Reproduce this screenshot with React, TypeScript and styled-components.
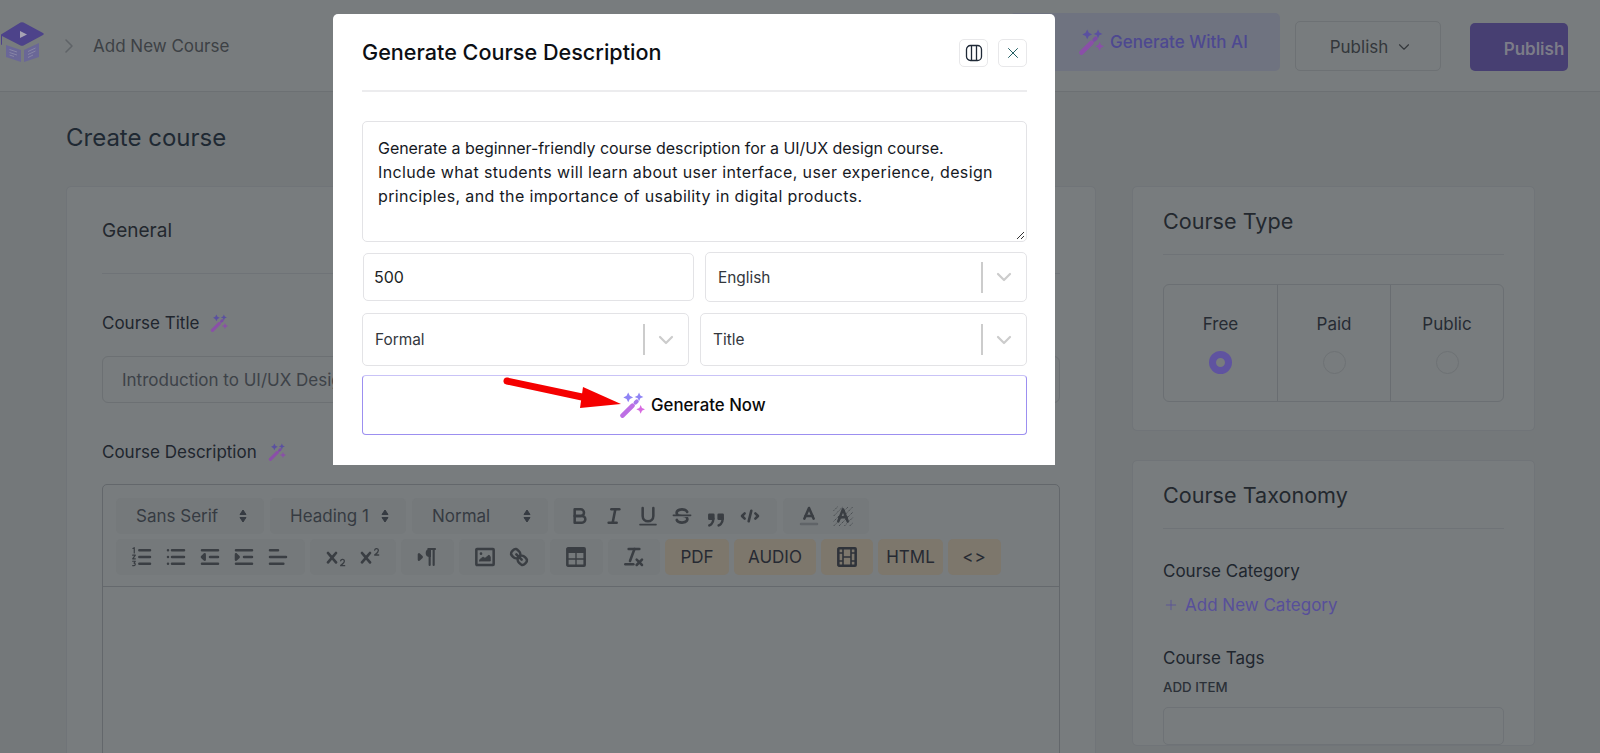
import React from "react"
import styled, { createGlobalStyle } from "styled-components"
import { ChevronDown, ChevronRight, Plus, X } from "lucide-react"

const GlobalStyle = createGlobalStyle`
  html, body {
    margin: 0;
    padding: 0;
    height: 753px;
    overflow: hidden;
    background: #74787a;
    font-family: "Inter", "Liberation Sans", sans-serif;
  }
  * { box-sizing: border-box; }
`

const Page = styled.div`
  position: relative;
  width: 1600px;
  height: 753px;
  overflow: hidden;
`

const Header = styled.header`
  height: 92px;
  padding: 0 32px 20px 0;
  display: flex;
  justify-content: space-between;
  align-items: flex-end;
  background: #787c7e;
  border-bottom: 1px solid #6c7073;
`

const Crumbs = styled.div`
  display: flex;
  align-items: center;
  align-self: center;
  margin-top: 20px;
  color: #3d4145;
  font-size: 17px;
`

const CrumbArrow = styled.span`
  display: flex;
  margin: 0 12px 0 11px;
  color: #5f6367;
`

const HeaderActions = styled.div`
  display: flex;
  align-items: flex-end;
`

const AiButton = styled.div`
  width: 270px;
  height: 58px;
  margin-right: 15px;
  padding-left: 68px;
  display: flex;
  align-items: center;
  gap: 6px;
  border-radius: 5px;
  background: #6f7380;
  color: #4d4890;
  font-size: 17px;
  font-weight: 500;
`

const PublishSelect = styled.div`
  width: 146px;
  height: 50px;
  margin-right: 29px;
  padding: 2px 0 0 7px;
  display: flex;
  align-items: center;
  justify-content: center;
  gap: 7px;
  border: 1px solid #6d7174;
  border-radius: 5px;
  color: #33373b;
  font-size: 17px;
`

const PublishButton = styled.div`
  width: 98px;
  height: 48px;
  padding: 3px 0 0 30px;
  display: flex;
  align-items: center;
  justify-content: center;
  border-radius: 5px;
  background: #473f72;
  color: #7c7c88;
  font-size: 17px;
  font-weight: 600;
`

const Main = styled.main`
  padding: 0 64px 0 66px;
`

const PageTitle = styled.h1`
  margin: 0;
  height: 94px;
  padding-top: 30px;
  font-size: 24px;
  line-height: 32px;
  font-weight: 400;
  color: #1f2933;
`

const Columns = styled.div`
  display: grid;
  grid-template-columns: 1030px 403px;
  column-gap: 36px;
`

const Card = styled.section`
  padding: 0 35px;
  background: #787c7e;
  border: 1px solid #707478;
  border-radius: 5px;
`

const SideColumn = styled.div`
  display: flex;
  flex-direction: column;
  gap: 29px;
`

const SideCard = styled(Card)`
  padding: 0 30px;
`

const CardHead = styled.h2<{ $size?: number }>`
  margin: 0;
  height: 87px;
  display: flex;
  align-items: center;
  font-size: ${({ $size }) => $size || 19}px;
  font-weight: 400;
  color: #23282e;
  border-bottom: 1px solid #6f7377;
`

const SideHead = styled(CardHead)`
  height: 68px;
`

const FieldLabel = styled.div`
  display: flex;
  align-items: center;
  gap: 11px;
  height: 24px;
  font-size: 17px;
  font-weight: 400;
  color: #20262e;
`

const TitleLabel = styled(FieldLabel)`
  margin: 37px 0 21px;
`

const DescLabel = styled(FieldLabel)`
  margin: 37px 0 20px;
`

const TitleInput = styled.div`
  height: 47px;
  padding: 0 19px;
  display: flex;
  align-items: center;
  border: 1px solid #6c7073;
  border-radius: 6px;
  color: #3d4248;
  font-size: 17px;
  white-space: nowrap;
`

const Editor = styled.div`
  height: 400px;
  border: 1px solid #63676b;
  border-radius: 5px;
`

const Toolbar = styled.div`
  height: 102px;
  padding: 13px 0 0 13px;
  border-bottom: 1px solid #65696d;
  display: flex;
  flex-direction: column;
  gap: 5px;
`

const ToolRow = styled.div<{ $gap: number }>`
  display: flex;
  gap: ${({ $gap }) => $gap}px;
`

const ToolGroup = styled.div<{ $width?: number }>`
  height: 36px;
  padding: 0 9.25px;
  ${({ $width }) => ($width ? `width: ${$width}px;` : "")}
  display: flex;
  align-items: center;
  border-radius: 5px;
  background: #75797b;
`

const ToolIcon = styled.span`
  width: 34px;
  height: 24px;
  display: flex;
  align-items: center;
  justify-content: center;
  color: #3a3e43;
`

const FontSelect = styled(ToolGroup)`
  padding: 0 12px 0 0;
  justify-content: space-between;
  color: #363b42;
  font-size: 17px;
`

const SelectText = styled.span`
  margin-left: 20px;
`

const TanButton = styled.div<{ $width: number }>`
  width: ${({ $width }) => $width}px;
  height: 36px;
  display: flex;
  align-items: center;
  justify-content: center;
  border-radius: 5px;
  background: #7d776c;
  color: #262a33;
  font-size: 17px;
`

const CodeLabel = styled.span`
  letter-spacing: 1px;
`

const ChoiceBox = styled.div`
  margin: 29px 0 28px;
  height: 118px;
  display: grid;
  grid-template-columns: repeat(3, 1fr);
  border: 1px solid #6b6f73;
  border-radius: 6px;
`

const Choice = styled.div`
  padding-top: 28px;
  display: flex;
  flex-direction: column;
  align-items: center;
  gap: 16px;
  font-size: 17px;
  line-height: 22px;
  color: #262b33;
  & + & {
    border-left: 1px solid #696d71;
  }
`

const Radio = styled.span<{ $on?: boolean }>`
  width: 23px;
  height: 23px;
  border-radius: 50%;
  border: ${({ $on }) => ($on ? "7px solid #5f53a0" : "1px solid #6e7275")};
  background: #787c7e;
`

const SideLabel = styled(FieldLabel)`
  margin-top: 30px;
`

const AddLink = styled.div`
  margin-top: 10px;
  display: flex;
  align-items: center;
  gap: 6px;
  height: 24px;
  font-size: 17px;
  color: #574f9a;
`

const TagsLabel = styled(FieldLabel)`
  margin-top: 29px;
`

const SmallLabel = styled.div`
  margin-top: 8px;
  font-size: 13.3px;
  line-height: 18px;
  font-weight: 500;
  color: #2b3037;
`

const TagsInput = styled.div`
  margin-top: 11px;
  height: 38px;
  border: 1px solid #6e7276;
  border-radius: 5px;
`

const Modal = styled.div`
  position: absolute;
  top: 14px;
  left: 333px;
  width: 722px;
  height: 451px;
  padding: 0 28px 0 29px;
  background: #fff;
  border-radius: 5px 5px 0 0;
`

const ModalHead = styled.div`
  height: 78px;
  padding-top: 24px;
  display: flex;
  align-items: flex-start;
  justify-content: space-between;
  border-bottom: 2px solid #ececee;
`

const ModalTitle = styled.h3`
  margin: 0;
  font-size: 21.6px;
  line-height: 28px;
  font-weight: 500;
  color: #0c0f14;
`

const ModalTools = styled.div`
  margin-top: 1px;
  display: flex;
  gap: 10px;
`

const SquareButton = styled.span`
  width: 29px;
  height: 28px;
  display: flex;
  align-items: center;
  justify-content: center;
  border: 1px solid #e8e8ea;
  border-radius: 5px;
  color: #1d5a5f;
`

const PromptBox = styled.div`
  position: relative;
  margin-top: 29px;
  height: 121px;
  padding: 14px 15px 0;
  border: 1px solid #e3e3e6;
  border-radius: 5px;
  font-size: 16px;
  line-height: 24px;
  color: #16191f;
`

const PromptLine = styled.span<{ $track: number }>`
  display: block;
  white-space: nowrap;
  letter-spacing: ${({ $track }) => $track}px;
`

const ResizeHandle = styled.svg`
  position: absolute;
  right: 1px;
  bottom: 1px;
`

const FieldRow = styled.div<{ $cols: string; $top: number }>`
  margin-top: ${({ $top }) => $top}px;
  display: grid;
  grid-template-columns: ${({ $cols }) => $cols};
  column-gap: 11px;
`

const NumberField = styled.div`
  height: 48px;
  margin: 1px 0 0 1px;
  padding: 0 10px;
  display: flex;
  align-items: center;
  border: 1px solid #e3e3e6;
  border-radius: 5px;
  font-size: 16px;
  color: #1c1f25;
`

const SelectField = styled.div<{ $height: number }>`
  height: ${({ $height }) => $height}px;
  padding: 0 10px 0 12px;
  display: flex;
  align-items: center;
  border: 1px solid #e3e3e6;
  border-radius: 5px;
  font-size: 15.4px;
  color: #33373d;
`

const SelectValue = styled.span`
  flex: 1;
`

const SelectDivider = styled.span`
  width: 2px;
  height: 31px;
  margin-right: 9px;
  background: #cccccc;
`

const SelectCaret = styled.span`
  display: flex;
  color: #cccccc;
`

const GenerateButton = styled.div`
  position: relative;
  margin-top: 9px;
  height: 60px;
  padding-left: 256px;
  display: flex;
  align-items: center;
  gap: 6px;
  border: 1px solid #9c8ff0;
  border-top-color: #c9c3f7;
  border-radius: 4px;
  font-size: 16.8px;
  font-weight: 500;
  color: #0a0a0a;
`

const RedArrow = styled.svg`
  position: absolute;
  left: 135px;
  top: -3px;
`

const stroke = {
  fill: "none",
  stroke: "currentColor",
  strokeWidth: 1.9,
  strokeLinecap: "round" as const,
  strokeLinejoin: "round" as const,
}

const Q = ({ children }: { children: React.ReactNode }) => (
  <ToolIcon>
    <svg width="24" height="24" viewBox="0 0 18 18">
      <g {...stroke}>{children}</g>
    </svg>
  </ToolIcon>
)

const SolidPath = ({ d }: { d: string }) => <path d={d} fill="currentColor" stroke="none" />

const Wand = ({ size, dim }: { size: number; dim?: boolean }) => (
  <svg width={size} height={size} viewBox="0 0 24 24">
    <path d="M3.2 21.8 12.5 12.5" stroke={dim ? "#8a4fa8" : "#bd6fe4"} strokeWidth="4.2" strokeLinecap="round" />
    <path d="M15.2 9.8 16.4 8.6" stroke={dim ? "#7a4ca6" : "#a878ea"} strokeWidth="3.6" strokeLinecap="round" />
    <path d="M8.5 0.5 10 3.5 13 5 10 6.5 8.5 9.5 7 6.5 4 5 7 3.5Z" fill={dim ? "#5a50a0" : "#8f84f5"} />
    <path d="M18.5 0.5 19.7 3.3 22.5 4.5 19.7 5.7 18.5 8.5 17.3 5.7 14.5 4.5 17.3 3.3Z" fill={dim ? "#5a50a0" : "#8f84f5"} />
    <path d="M20 12 21.2 14.8 24 16 21.2 17.2 20 20 18.8 17.2 16 16 18.8 14.8Z" fill={dim ? "#8a4fa8" : "#d86ae0"} />
  </svg>
)

const Logo = () => (
  <svg width="46" height="48" viewBox="0 -2 46 48">
    <path d="M20.5 -1.4Q22 -2.2 23.5 -1.4L43 9Q44.5 10 43 11L23.5 21.5Q22 22.2 20.5 21.5L2 12V20.5L1 21V10.5Z" fill="#4d438a" />
    <path d="M20 7 27 10.5 20 14Z" fill="#a6a3b4" />
    <path d="M6 21 21 26V38L6 33Z" fill="#6a6797" />
    <path d="M24 26 39 19V33L24 38Z" fill="#6a6797" />
    <path d="M9.5 25.5 17 28M9.5 28.5 17 31M9.5 31 14 32.5M28 27.5 35.5 24M28 30.5 35.5 27M28 33.5 33 31" stroke="#8785a6" strokeWidth="1" />
  </svg>
)

const Updown = () => (
  <svg width="18" height="18" viewBox="0 0 18 18" fill="currentColor" stroke="currentColor" strokeLinejoin="round">
    <path d="M6 7.5 9 3 12 7.5Z" />
    <path d="M6 10.5 9 15 12 10.5Z" />
  </svg>
)

const Caret = () => (
  <SelectCaret>
    <ChevronDown size={24} strokeWidth={2.2} />
  </SelectCaret>
)

const App = () => {
  return (
    <Page>
      <GlobalStyle />
      <Header>
        <Crumbs>
          <Logo />
          <CrumbArrow>
            <ChevronRight size={24} strokeWidth={1.5} />
          </CrumbArrow>
          Add New Course
        </Crumbs>
        <HeaderActions>
          <AiButton>
            <Wand size={26} dim />
            Generate With AI
          </AiButton>
          <PublishSelect>
            Publish
            <ChevronDown size={18} strokeWidth={1.5} />
          </PublishSelect>
          <PublishButton>Publish</PublishButton>
        </HeaderActions>
      </Header>

      <Main>
        <PageTitle>Create course</PageTitle>
        <Columns>
          <Card>
            <CardHead>General</CardHead>
            <TitleLabel>
              Course Title
              <Wand size={18} dim />
            </TitleLabel>
            <TitleInput>Introduction to UI/UX Design</TitleInput>
            <DescLabel>
              Course Description
              <Wand size={18} dim />
            </DescLabel>
            <Editor>
              <Toolbar>
                <ToolRow $gap={6}>
                  <FontSelect $width={148}>
                    <SelectText>Sans Serif</SelectText>
                    <Updown />
                  </FontSelect>
                  <FontSelect $width={136}>
                    <SelectText>Heading 1</SelectText>
                    <Updown />
                  </FontSelect>
                  <FontSelect $width={136}>
                    <SelectText>Normal</SelectText>
                    <Updown />
                  </FontSelect>
                  <ToolGroup>
                    <Q>
                      <path d="M5,4H9.5A2.5,2.5,0,0,1,12,6.5v0A2.5,2.5,0,0,1,9.5,9H5V4Z" />
                      <path d="M5,9h5.5A2.5,2.5,0,0,1,13,11.5v0A2.5,2.5,0,0,1,10.5,14H5V9Z" />
                    </Q>
                    <Q>
                      <line x1="7" x2="13" y1="4" y2="4" />
                      <line x1="5" x2="11" y1="14" y2="14" />
                      <line x1="8" x2="10" y1="14" y2="4" />
                    </Q>
                    <Q>
                      <path d="M5,3V9a4,4,0,0,0,4,4h0a4,4,0,0,0,4-4V3" />
                      <line x1="3" x2="15" y1="15.5" y2="15.5" strokeWidth="1.2" />
                    </Q>
                    <Q>
                      <line x1="15.5" x2="2.5" y1="8.5" y2="8.5" strokeWidth="1.2" />
                      <SolidPath d="M9.007,8C6.542,7.791,6,7.519,6,6.5,6,5.792,7.283,5,9,5c1.571,0,2.765.679,2.969,1.309a1,1,0,0,0,1.9-.617C13.356,4.106,11.354,3,9,3,6.2,3,4,4.538,4,6.5a3.2,3.2,0,0,0,.5,1.843Z" />
                      <SolidPath d="M8.984,10C11.457,10.208,12,10.479,12,11.5c0,.708-1.283,1.5-3,1.5-1.571,0-2.765-.679-2.969-1.309a1,1,0,1,0-1.9.617C4.644,13.894,6.646,15,9,15c2.8,0,5-1.538,5-3.5a3.2,3.2,0,0,0-.5-1.843Z" />
                    </Q>
                    <Q>
                      <rect x="4" y="8" width="3" height="3" fill="currentColor" />
                      <rect x="11" y="8" width="3" height="3" fill="currentColor" />
                      <path d="M7,11c0,4-3,5-3,5" />
                      <path d="M14,11c0,4-3,5-3,5" />
                    </Q>
                    <Q>
                      <polyline points="5 7 3 9 5 11" />
                      <polyline points="13 7 15 9 13 11" />
                      <line x1="10" x2="8" y1="5" y2="13" />
                    </Q>
                  </ToolGroup>
                  <ToolGroup>
                    <Q>
                      <line x1="3" x2="15" y1="15" y2="15" stroke="#606468" />
                      <polyline points="5.5 11 9 3 12.5 11" />
                      <line x1="11.63" x2="6.38" y1="9" y2="9" />
                    </Q>
                    <Q>
                      <path d="M2 5 5 2M2 9 9 2M2 13 13 2M2 16.5 16.5 2M6 16.5 16.5 6M10 16.5 16.5 10M14 16.5 16.5 14" strokeWidth="0.7" strokeDasharray="0.8 0.8" strokeLinecap="butt" />
                      <polyline points="5.5 13 9 4 12.5 13" />
                      <line x1="11.63" x2="6.38" y1="10" y2="10" />
                    </Q>
                  </ToolGroup>
                </ToolRow>
                <ToolRow $gap={5}>
                  <ToolGroup>
                    <Q>
                      <path d="M7 4H15M7 9H15M7 14H15" />
                      <path d="M2.2 2.6 3.2 2V6M2 7.6H4L2 10.4H4M2 12.2H4L3 13.6C4.4 13.6 4.4 15.8 2 15.4" strokeWidth="0.9" />
                    </Q>
                    <Q>
                      <path d="M6 4H15M6 9H15M6 14H15M3 4H3M3 9H3M3 14H3" />
                    </Q>
                    <Q>
                      <path d="M3 14H15M3 4H15M9 9H15" />
                      <polyline points="5 7 5 11 3 9 5 7" fill="currentColor" />
                    </Q>
                    <Q>
                      <path d="M3 14H15M3 4H15M9 9H15" />
                      <polyline points="3 7 3 11 5 9 3 7" fill="currentColor" />
                    </Q>
                    <Q>
                      <path d="M3 9H15M3 14H13M3 4H9" />
                    </Q>
                  </ToolGroup>
                  <ToolGroup>
                    <Q>
                      <SolidPath d="M9.65,5.241a1,1,0,0,0-1.409.108L6,7.964,3.759,5.349A1,1,0,0,0,2.192,6.59178Q2.21541,6.6213,2.241,6.649L4.684,9.5,2.241,12.35A1,1,0,0,0,3.71,13.70722q0.02557-.02768.049-0.05722L6,11.036,8.241,13.65a1,1,0,1,0,1.567-1.24277Q9.78459,12.3777,9.759,12.35L7.316,9.5,9.759,6.651A1,1,0,0,0,9.65,5.241Z" />
                      <SolidPath d="M15.5,15H13.861a3.858,3.858,0,0,0,1.914-2.975,1.8,1.8,0,0,0-1.6-1.751A1.921,1.921,0,0,0,12.021,11.7a0.50013,0.50013,0,1,0,.957.291h0a0.914,0.914,0,0,1,1.053-.725,0.81,0.81,0,0,1,.744.762c0,1.076-1.16971,1.86-1.93971,2.43A1.45639,1.45639,0,0,0,12,15.5a0.5,0.5,0,0,0,.5.5h3A0.5,0.5,0,0,0,15.5,15Z" />
                    </Q>
                    <Q>
                      <SolidPath d="M9.65,5.241a1,1,0,0,0-1.409.108L6,7.964,3.759,5.349A1,1,0,0,0,2.192,6.59178Q2.21541,6.6213,2.241,6.649L4.684,9.5,2.241,12.35A1,1,0,0,0,3.71,13.70722q0.02557-.02768.049-0.05722L6,11.036,8.241,13.65a1,1,0,1,0,1.567-1.24277Q9.78459,12.3777,9.759,12.35L7.316,9.5,9.759,6.651A1,1,0,0,0,9.65,5.241Z" />
                      <SolidPath d="M15.5,7H13.861a4.015,4.015,0,0,0,1.914-2.975,1.8,1.8,0,0,0-1.6-1.751A1.922,1.922,0,0,0,12.021,3.7a0.5,0.5,0,1,0,.957.291,0.917,0.917,0,0,1,1.053-.725,0.81,0.81,0,0,1,.744.762c0,1.077-1.164,1.925-1.934,2.486A1.423,1.423,0,0,0,12,7.5a0.5,0.5,0,0,0,.5.5h3A0.5,0.5,0,0,0,15.5,7Z" />
                    </Q>
                  </ToolGroup>
                  <ToolGroup>
                    <Q>
                      <polygon points="3 11 5 9 3 7" fill="currentColor" />
                      <SolidPath d="M11,3a3,3,0,0,0,0,6h1V3H11Z" />
                      <path d="M15 3H10M11 3V15M14 3V15" strokeWidth="1.6" />
                    </Q>
                  </ToolGroup>
                  <ToolGroup>
                    <Q>
                      <rect x="2.5" y="3" width="13" height="12" rx="0.5" />
                      <circle cx="6" cy="6.5" r="1" fill="currentColor" strokeWidth="0" />
                      <polyline points="5 12 5 11 7.5 9 9 10 12 7.5 13 9 13 12 5 12" fill="currentColor" strokeWidth="0.6" />
                    </Q>
                    <Q>
                      <line x1="7" x2="11" y1="7" y2="11" />
                      <path d="M8.9,4.577a3.476,3.476,0,0,1,.36,4.679A3.476,3.476,0,0,1,4.577,8.9C3.185,7.5,2.035,6.4,4.217,4.217S7.5,3.185,8.9,4.577Z" />
                      <path d="M13.423,9.1a3.476,3.476,0,0,0-4.679-.36,3.476,3.476,0,0,0,.36,4.679c1.392,1.392,2.5,2.542,4.679.36S14.815,10.5,13.423,9.1Z" />
                    </Q>
                  </ToolGroup>
                  <ToolGroup>
                    <Q>
                      <rect x="2.5" y="2.5" width="13" height="13" rx="0.5" />
                      <rect x="2.5" y="2.5" width="13" height="3.5" fill="currentColor" strokeWidth="0" />
                      <path d="M2.5 10.5H15.5M9 6V15.5" strokeWidth="1" />
                    </Q>
                  </ToolGroup>
                  <ToolGroup>
                    <Q>
                      <line x1="5" x2="13" y1="3" y2="3" />
                      <line x1="6" x2="9.35" y1="12" y2="3" />
                      <line x1="11" x2="15" y1="11" y2="15" />
                      <line x1="15" x2="11" y1="11" y2="15" />
                      <line x1="2.5" x2="8.5" y1="14.5" y2="14.5" />
                    </Q>
                  </ToolGroup>
                  <TanButton $width={64}>PDF</TanButton>
                  <TanButton $width={82}>AUDIO</TanButton>
                  <TanButton $width={52}>
                    <svg width="24" height="24" viewBox="0 0 18 18" fill="none" stroke="#2f333a" strokeWidth="1.9">
                      <rect x="2.5" y="2.5" width="13" height="13" rx="0.5" />
                      <path d="M6 2.5V15.5M12 2.5V15.5M6 9H12M2.5 6H6M2.5 12H6M12 6H15.5M12 12H15.5" strokeWidth="1.2" />
                    </svg>
                  </TanButton>
                  <TanButton $width={65}>HTML</TanButton>
                  <TanButton $width={53}>
                    <CodeLabel>&lt;&gt;</CodeLabel>
                  </TanButton>
                </ToolRow>
              </Toolbar>
            </Editor>
          </Card>

          <SideColumn>
            <SideCard>
              <SideHead $size={21.6}>Course Type</SideHead>
              <ChoiceBox>
                <Choice>
                  Free
                  <Radio $on />
                </Choice>
                <Choice>
                  Paid
                  <Radio />
                </Choice>
                <Choice>
                  Public
                  <Radio />
                </Choice>
              </ChoiceBox>
            </SideCard>
            <SideCard>
              <SideHead $size={21.6}>Course Taxonomy</SideHead>
              <SideLabel>Course Category</SideLabel>
              <AddLink>
                <Plus size={16} strokeWidth={1.25} />
                Add New Category
              </AddLink>
              <TagsLabel>Course Tags</TagsLabel>
              <SmallLabel>ADD ITEM</SmallLabel>
              <TagsInput />
            </SideCard>
          </SideColumn>
        </Columns>
      </Main>

      <Modal>
        <ModalHead>
          <ModalTitle>Generate Course Description</ModalTitle>
          <ModalTools>
            <SquareButton>
              <svg width="18" height="18" viewBox="0 0 18 18" fill="none" stroke="#1f2937" strokeWidth="1.3">
                <rect x="1.5" y="1.5" width="15" height="15" rx="4" />
                <path d="M6.5 1.5V16.5M11.5 1.5V16.5" />
              </svg>
            </SquareButton>
            <SquareButton>
              <X size={18} strokeWidth={1.3} />
            </SquareButton>
          </ModalTools>
        </ModalHead>
        <PromptBox>
          <PromptLine $track={-0.05}>Generate a beginner-friendly course description for a UI/UX design course.</PromptLine>
          <PromptLine $track={0.37}>Include what students will learn about user interface, user experience, design</PromptLine>
          <PromptLine $track={0.36}>principles, and the importance of usability in digital products.</PromptLine>
          <ResizeHandle width="10" height="10" viewBox="0 0 10 10" stroke="#333" strokeWidth="1">
            <path d="M2 9 9 2M6 9 9 6" />
          </ResizeHandle>
        </PromptBox>
        <FieldRow $top={10} $cols="332px 322px">
          <NumberField>500</NumberField>
          <SelectField $height={50}>
            <SelectValue>English</SelectValue>
            <SelectDivider />
            <Caret />
          </SelectField>
        </FieldRow>
        <FieldRow $top={11} $cols="327px 327px">
          <SelectField $height={53}>
            <SelectValue>Formal</SelectValue>
            <SelectDivider />
            <Caret />
          </SelectField>
          <SelectField $height={53}>
            <SelectValue>Title</SelectValue>
            <SelectDivider />
            <Caret />
          </SelectField>
        </FieldRow>
        <GenerateButton>
          <Wand size={26} />
          Generate Now
          <RedArrow width="130" height="42" viewBox="0 0 130 42">
            <path d="M9 8 84 24" stroke="#f50000" strokeWidth="7" strokeLinecap="round" />
            <path d="M85 14 123 31 82 35Z" fill="#f50000" />
          </RedArrow>
        </GenerateButton>
      </Modal>
    </Page>
  )
}

export default App
